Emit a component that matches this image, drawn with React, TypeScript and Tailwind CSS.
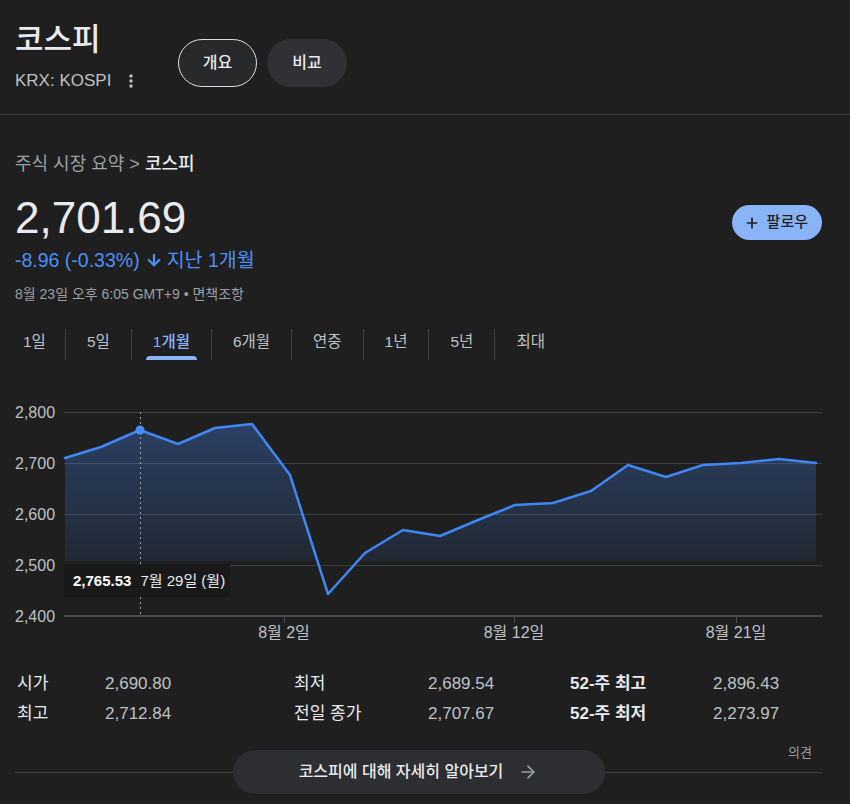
import { ArrowDown, ArrowRight, Plus } from 'lucide-react';

const tabs = ['1일', '5일', '1개월', '6개월', '연중', '1년', '5년', '최대'];

// chart points, container coords (x px, y px from chart top)
const points: [number, number][] = [
  [65, 64], [101, 53], [140, 36], [178, 50], [215, 34], [252, 30], [290, 81],
  [328, 200], [365, 159], [403, 136], [440, 142], [478, 126], [515, 111],
  [553, 109], [591, 97], [628, 71], [666, 83], [703, 71], [741, 69],
  [779, 65], [816, 69],
];

const yLabels = [
  { label: '2,800', y: 18 },
  { label: '2,700', y: 69 },
  { label: '2,600', y: 120 },
  { label: '2,500', y: 171 },
  { label: '2,400', y: 222 },
];

const xLabels = [
  { label: '8월 2일', x: 284 },
  { label: '8월 12일', x: 514 },
  { label: '8월 21일', x: 736 },
];

const stats = [
  ['시가', '2,690.80', '최저', '2,689.54', '52-주 최고', '2,896.43'],
  ['최고', '2,712.84', '전일 종가', '2,707.67', '52-주 최저', '2,273.97'],
];

function Chart() {
  const line = points.map(([x, y]) => `${x},${y}`).join(' ');
  const area = `65,167 ${line} 816,167`;

  return (
    <div className="relative h-[250px] w-full">
      <svg width="850" height="250" className="block">
        <defs>
          <linearGradient id="fill" x1="0" y1="0" x2="0" y2="1">
            <stop offset="0%" stopColor="#4285f4" stopOpacity="0.32" />
            <stop offset="100%" stopColor="#4285f4" stopOpacity="0.04" />
          </linearGradient>
          <clipPath id="clip">
            <rect x="0" y="0" width="850" height="167" />
          </clipPath>
        </defs>
        {[18, 69, 120, 171].map((y) => (
          <line key={y} x1="64" x2="822" y1={y + 0.5} y2={y + 0.5} stroke="#3c4043" strokeWidth="1" />
        ))}
        <line x1="64" x2="822" y1="222" y2="222" stroke="#4a4c50" strokeWidth="2" />
        {xLabels.map((t) => (
          <line key={t.x} x1={t.x + 0.5} x2={t.x + 0.5} y1="222" y2="229" stroke="#4a4c50" strokeWidth="1" />
        ))}
        <polygon points={area} fill="url(#fill)" clipPath="url(#clip)" />
        <line x1="140.5" x2="140.5" y1="18" y2="222" stroke="#9aa0a6" strokeWidth="1" strokeDasharray="2 3" />
        <polyline
          points={line}
          fill="none"
          stroke="#3f87f5"
          strokeWidth="2.5"
          strokeLinejoin="round"
          strokeLinecap="round"
        />
        <circle cx="140" cy="36" r="4.5" fill="#4a8ff7" />
      </svg>

      {yLabels.map((l) => (
        <span
          key={l.label}
          className="absolute left-[15px] text-[16px] leading-[18px] text-[#bdc1c6]"
          style={{ top: l.y - 8 }}
        >
          {l.label}
        </span>
      ))}

      {xLabels.map((l) => (
        <span
          key={l.label}
          className="absolute top-[230px] -translate-x-1/2 whitespace-nowrap text-[16px] leading-[18px] text-[#bdc1c6]"
          style={{ left: l.x }}
        >
          {l.label}
        </span>
      ))}

      <div className="absolute left-[64px] top-[170px] flex h-[33px] w-[166px] items-center gap-[9px] bg-[#191919] px-[9px] text-[15px] leading-[18px]">
        <span className="font-semibold text-white">2,765.53</span>
        <span className="whitespace-nowrap text-[#e8eaed]">7월 29일 (월)</span>
      </div>
    </div>
  );
}

export default function App() {
  return (
    <div className="min-h-screen w-full overflow-hidden bg-[#1f1f1f] font-['Liberation_Sans','Noto_Sans_CJK_KR',sans-serif] text-[#e8eaed]">
      {/* header */}
      <div className="flex h-[114px] pl-[15px]">
        <div className="w-[163px] pt-[22px]">
          <h1 className="text-[31px] font-medium leading-[36px] text-[#e8eaed]">코스피</h1>
          <div className="mt-[11px] flex items-center">
            <span className="text-[17px] leading-[24px] text-[#bdc1c6]">KRX: KOSPI</span>
            <svg className="ml-[12px]" width="16" height="16" viewBox="0 0 16 16" fill="#bdc1c6">
              <circle cx="8" cy="3" r="1.7" />
              <circle cx="8" cy="8" r="1.7" />
              <circle cx="8" cy="13" r="1.7" />
            </svg>
          </div>
        </div>
        <div className="mt-[39px] flex gap-[10px] self-start">
          <button className="flex h-[48px] w-[79px] items-center justify-center rounded-full border-[1.5px] border-[#dadce0] bg-[#28292b] text-[16px] font-medium text-[#e8eaed]">
            개요
          </button>
          <button className="flex h-[48px] w-[80px] items-center justify-center rounded-full bg-[#303134] text-[16px] font-medium text-[#e8eaed]">
            비교
          </button>
        </div>
      </div>
      <div className="h-px w-full bg-[#3c4043]" />

      {/* summary */}
      <div className="pl-[15px] pr-[28px] pt-[37px]">
        <div className="text-[18px] leading-[24px] text-[#9aa0a6]">
          주식 시장 요약 &gt; <span className="font-medium text-[#e8eaed]">코스피</span>
        </div>

        <div className="mt-[16px] flex items-start justify-between">
          <div>
            <div className="text-[44px] leading-[52px] text-[#e8eaed]">2,701.69</div>
            <div className="mt-[4px] flex items-center text-[19.5px] leading-[24px] text-[#4d8ff5]">
              <span>-8.96 (-0.33%)</span>
              <ArrowDown size={18} strokeWidth={3} className="ml-[5px]" />
              <span className="ml-[4px]">지난 1개월</span>
            </div>
            <div className="mt-[13px] text-[14px] leading-[18px] text-[#9aa0a6]">
              8월 23일 오후 6:05 GMT+9 • 면책조항
            </div>
          </div>
          <button className="mt-[13px] flex h-[35px] items-center rounded-full bg-[#8ab4f8] pl-[12px] pr-[14px] text-[15px] font-medium text-[#1f1f1f]">
            <Plus size={16} strokeWidth={2.5} />
            <span className="ml-[7px]">팔로우</span>
          </button>
        </div>

        {/* range tabs */}
        <div className="mt-[26px] flex h-[31px] items-stretch">
          {tabs.map((t, i) => (
            <div key={t} className="flex items-stretch">
              {i > 0 && <div className="w-px bg-[#3c4043]" />}
              <div className={i === 0 ? 'pl-[8px] pr-[19px]' : 'px-[21px]'}>
                <div className="relative h-[31px]">
                  <span
                    className={`block whitespace-nowrap text-[15.5px] leading-[26px] ${
                      t === '1개월' ? 'font-medium text-[#8ab4f8]' : 'text-[#bdc1c6]'
                    }`}
                  >
                    {t}
                  </span>
                  {t === '1개월' && (
                    <div className="absolute -left-[7px] -right-[7px] bottom-0 h-[4px] rounded-t-[4px] bg-[#8ab4f8]" />
                  )}
                </div>
              </div>
            </div>
          ))}
        </div>
      </div>

      <div className="mt-[34px]">
        <Chart />
      </div>

      {/* stats */}
      <div className="mt-[25px] pl-[15px] pr-[28px]">
        {stats.map((row) => (
          <div
            key={row[0]}
            className="grid grid-cols-[90px_189px_134px_142px_143px_1fr] text-[17px] leading-[30px]"
          >
            <span className="pl-[2px] text-[#e8eaed]">{row[0]}</span>
            <span className="text-[#bdc1c6]">{row[1]}</span>
            <span className="text-[#e8eaed]">{row[2]}</span>
            <span className="text-[#bdc1c6]">{row[3]}</span>
            <span className="font-bold text-[#e8eaed]">{row[4]}</span>
            <span className="text-[#bdc1c6]">{row[5]}</span>
          </div>
        ))}
      </div>

      {/* learn more */}
      <div className="relative mt-[21px] pl-[15px] pr-[28px]">
        <span className="absolute right-[38px] -top-[6px] text-[13px] leading-[18px] text-[#9aa0a6]">의견</span>
        <div className="flex h-[44px] items-center">
          <div className="h-px flex-1 bg-[#3c4043]" />
          <button className="flex h-[44px] w-[372px] items-center justify-center gap-[15px] rounded-full bg-[#2d2e31] text-[16px] font-medium text-[#e8eaed]">
            <span>코스피에 대해 자세히 알아보기</span>
            <ArrowRight size={20} strokeWidth={2} className="text-[#9aa0a6]" />
          </button>
          <div className="h-px flex-1 bg-[#3c4043]" />
        </div>
      </div>
    </div>
  );
}
